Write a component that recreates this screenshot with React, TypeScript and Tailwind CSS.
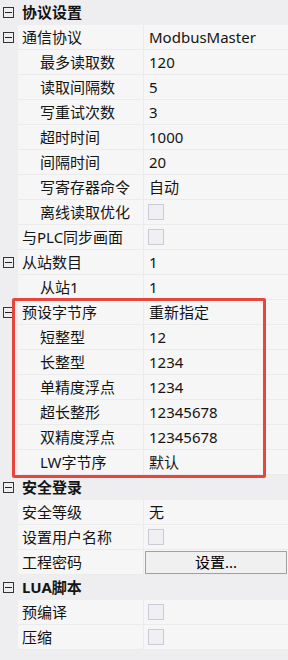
import React from 'react';

type Row = {
  label: string;
  kind: 'cat' | 'group' | 'item';
  level?: number;
  value?: string;
  check?: boolean;
  button?: string;
  expand?: boolean;
};

const rows: Row[] = [
  { label: '协议设置', kind: 'cat' },
  { label: '通信协议', kind: 'item', level: 1, value: 'ModbusMaster', expand: true },
  { label: '最多读取数', kind: 'item', level: 2, value: '120' },
  { label: '读取间隔数', kind: 'item', level: 2, value: '5' },
  { label: '写重试次数', kind: 'item', level: 2, value: '3' },
  { label: '超时时间', kind: 'item', level: 2, value: '1000' },
  { label: '间隔时间', kind: 'item', level: 2, value: '20' },
  { label: '写寄存器命令', kind: 'item', level: 2, value: '自动' },
  { label: '离线读取优化', kind: 'item', level: 2, check: true },
  { label: '与PLC同步画面', kind: 'item', level: 1, check: true },
  { label: '从站数目', kind: 'item', level: 1, value: '1', expand: true },
  { label: '从站1', kind: 'item', level: 2, value: '1' },
  { label: '预设字节序', kind: 'item', level: 1, value: '重新指定', expand: true },
  { label: '短整型', kind: 'item', level: 2, value: '12' },
  { label: '长整型', kind: 'item', level: 2, value: '1234' },
  { label: '单精度浮点', kind: 'item', level: 2, value: '1234' },
  { label: '超长整形', kind: 'item', level: 2, value: '12345678' },
  { label: '双精度浮点', kind: 'item', level: 2, value: '12345678' },
  { label: 'LW字节序', kind: 'item', level: 2, value: '默认' },
  { label: '安全登录', kind: 'cat' },
  { label: '安全等级', kind: 'item', level: 1, value: '无' },
  { label: '设置用户名称', kind: 'item', level: 1, check: true },
  { label: '工程密码', kind: 'item', level: 1, button: '设置...' },
  { label: 'LUA脚本', kind: 'cat' },
  { label: '预编译', kind: 'item', level: 1, check: true },
  { label: '压缩', kind: 'item', level: 1, check: true },
];

function Minus() {
  return (
    <div className="w-[11px] h-[11px] border border-[#333] flex items-center justify-center bg-transparent">
      <div className="w-[7px] h-px bg-[#222]" />
    </div>
  );
}

function Check() {
  return <div className="w-[16px] h-[16px] border border-[#cacad8] bg-[#efeff4]" />;
}

export default function App() {
  return (
    <div
      className="relative w-[288px] h-[660px] bg-[#eeeef1] text-[15px] text-[#141414] overflow-hidden"
      style={{ fontFamily: '"Noto Sans", "Noto Sans CJK SC", sans-serif' }}
    >
      {rows.map((r, i) =>
        r.kind === 'cat' ? (
          <div key={i} className="flex items-center h-[25px]">
            <div className="w-[22px] pl-[3px] flex items-center">
              <Minus />
            </div>
            <span className="font-bold leading-none">{r.label}</span>
          </div>
        ) : (
          <div key={i} className="flex h-[25px]">
            <div className="w-[18px] pl-[3px] flex items-center">{r.expand && <Minus />}</div>
            <div className="flex flex-1 bg-[#f6f6f6] border-b border-[#ebebeb]">
              <div
                className={`w-[126px] flex items-center leading-none border-r border-[#ebebeb] whitespace-nowrap ${
                  r.level === 2 ? 'pl-[22px]' : 'pl-[4px]'
                }`}
              >
                {r.label}
              </div>
              <div className="flex-1 flex items-center leading-none">
                {r.value && <span className="pl-[5px]">{r.value}</span>}
                {r.check && (
                  <div className="pl-[4px]">
                    <Check />
                  </div>
                )}
                {r.button && (
                  <button className="ml-px w-[142px] h-[23px] border border-[#a0a0a0] bg-[#f0f0f0] text-[15px] text-black leading-none">
                    {r.button}
                  </button>
                )}
              </div>
            </div>
          </div>
        )
      )}
      {/* annotation box */}
      <div className="absolute left-[12px] top-[298px] w-[254px] h-[180px] border-[3px] border-[#e8453c] rounded-[2px] pointer-events-none" />
    </div>
  );
}
